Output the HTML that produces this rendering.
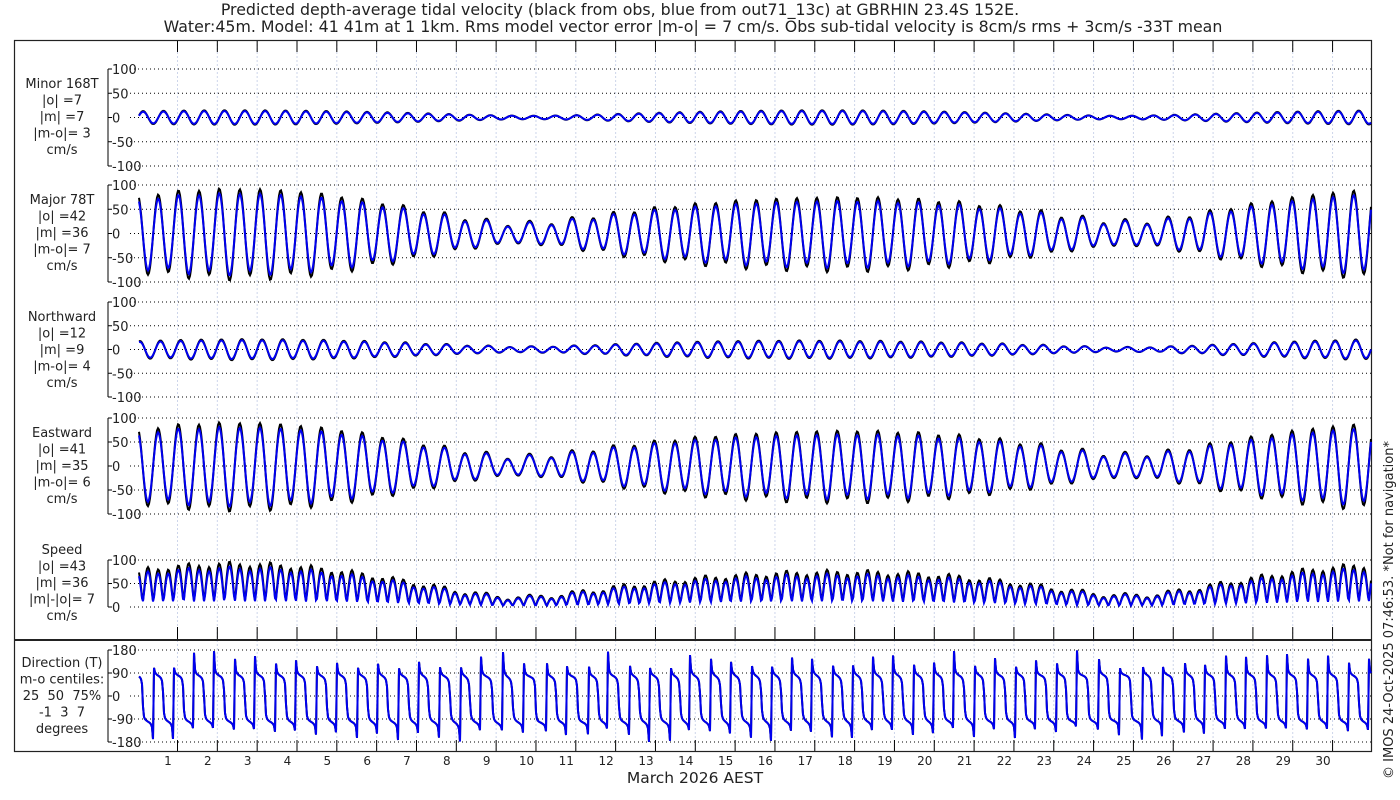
<!DOCTYPE html>
<html><head><meta charset="utf-8"><style>
html,body{margin:0;padding:0;background:#fff;width:1400px;height:800px;overflow:hidden}
svg text{font-family:"DejaVu Sans","Liberation Sans",sans-serif;fill:#222}
</style></head><body>
<svg id="s" width="1400" height="800" xmlns="http://www.w3.org/2000/svg">
<text x="620" y="15" font-size="15.8" text-anchor="middle">Predicted depth-average tidal velocity (black from obs, blue from out71_13c) at GBRHIN 23.4S 152E.</text>
<text x="693" y="32" font-size="15.8" text-anchor="middle">Water:45m. Model: 41 41m at 1 1km. Rms model vector error |m-o| = 7 cm/s. Obs sub-tidal velocity is 8cm/s rms + 3cm/s -33T mean</text>
<text x="695" y="783" font-size="15.5" text-anchor="middle">March 2026 AEST</text>
<text transform="translate(1393,610) rotate(-90)" font-size="13" text-anchor="middle">© IMOS 24-Oct-2025 07:46:53. *Not for navigation*</text>
<g id="g"></g>
</svg>
<script>
var g=document.getElementById('g'),h='';
function L(x1,y1,x2,y2,st){h+='<line x1="'+x1+'" y1="'+y1+'" x2="'+x2+'" y2="'+y2+'" '+st+'/>';}
function T(x,y,t,fs,a){h+='<text x="'+x+'" y="'+y+'" font-size="'+(fs||13)+'"'+(a?' text-anchor="'+a+'"':'')+' xml:space="preserve">'+t+'</text>';}
var X0=139,X1=1371;
for(var d=0;d<30;d++){var x=177.5+39.83*d;
 L(x,40,x,751,'stroke="#cdd5ea" stroke-width="1" stroke-dasharray="2,2"');
 L(x,40,x,52,'stroke="#000"');L(x,627,x,640,'stroke="#000"');L(x,740,x,751,'stroke="#000"');
 T(168+39.83*d,765,String(d+1),12,'middle');}
var P=[{z:117.5,s:0.485,t:[100,50,0,-50,-100],lab:['Minor 168T','|o| =7','|m| =7','|m-o|= 3','cm/s'],ly:88},
{z:233.5,s:0.485,t:[100,50,0,-50,-100],lab:['Major 78T','|o| =42','|m| =36','|m-o|= 7','cm/s'],ly:204},
{z:349.5,s:0.475,t:[100,50,0,-50,-100],lab:['Northward','|o| =12','|m| =9','|m-o|= 4','cm/s'],ly:321},
{z:466,s:0.48,t:[100,50,0,-50,-100],lab:['Eastward','|o| =41','|m| =35','|m-o|= 6','cm/s'],ly:437},
{z:607,s:0.47,t:[100,50,0],lab:['Speed','|o| =43','|m| =36','|m|-|o|= 7','cm/s'],ly:554},
{z:696,s:92/360,t:[180,90,0,-90,-180],lab:['Direction (T)','m-o centiles:','25  50  75%','-1  3  7','degrees'],ly:667}];
P.forEach(function(p,i){
 var top=p.z-p.t[0]*p.s,bot=p.z-p.t[p.t.length-1]*p.s;
 L(108,top,108,bot,'stroke="#000"');
 p.t.forEach(function(v){var y=p.z-v*p.s;
  L(108,y,112,y,'stroke="#000"');
  L(130,y,X1,y,'stroke="#000" stroke-dasharray="1,3"');
  T(112,y+5,String(v),13);});
 p.lab.forEach(function(t,k){T(62,p.ly+k*16.5,t,13,'middle');});
});
h+='<rect x="14.5" y="40.5" width="1357" height="711" fill="none" stroke="#222" stroke-width="1.2"/>';
L(14,640,1371,640,'stroke="#222" stroke-width="2"');
var PI2=Math.PI*2;
function tide(t,k){
 var ph=0.3, sp=-PI2*0.0677*2.5;
 var M=46*Math.cos(PI2*(1.9323*t)+ph);
 var S=28*Math.cos(PI2*(2.0*t)+ph+sp);
 var N=8*Math.cos(PI2*(1.896*t)+ph+PI2*0.0363*2.5);
 var K=5*Math.cos(PI2*1.0027*t+1.0);
 var maj=(M+S+N+K)*k;
 var mn=0.36*((46*Math.sin(PI2*1.9323*t+ph))+28*Math.sin(PI2*2*t+ph+sp))*k*0.5;
 return [maj,mn];}
function paths(k){var r=[[],[],[],[],[],[]];
 for(var x=X0;x<=X1;x+=1){var t=(x-137.7)/39.83;var v=tide(t,k);var maj=v[0],mn=v[1];
  var a=78*Math.PI/180;
  var E=maj*Math.sin(a)-mn*Math.cos(a);var Nn=(maj*Math.cos(a)+mn*Math.sin(a))*0.9;
  var sp=Math.sqrt(E*E+Nn*Nn);
  var dir=Math.atan2(E,Nn)*180/Math.PI;
  var vals=[mn,maj,Nn,E,sp,dir];
  for(var i=0;i<6;i++){var p=P[i];r[i].push([x,p.z-vals[i]*p.s]);}}
 return r;}
function draw(r,col,w){r.forEach(function(pts,i){var d='';
 for(var j=0;j<pts.length;j++){d+=(j?'L':'M')+pts[j][0]+','+pts[j][1].toFixed(1);}
 h+='<path d="'+d+'" fill="none" stroke="'+col+'" stroke-width="'+w+'"/>';});}
draw(paths(1.12),'#000',2);
draw(paths(1.0),'#0000ee',2);
g.innerHTML=h;
</script>
</body></html>
